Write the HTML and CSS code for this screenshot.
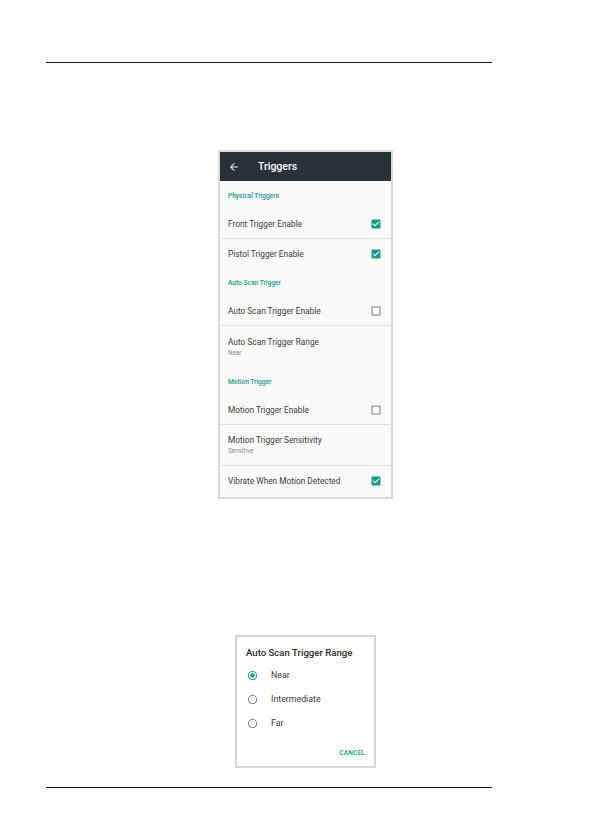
FILE: index.html
```html
<!DOCTYPE html>
<html lang="en">
<head>
  <meta charset="UTF-8">
  <meta name="viewport" content="width=device-width, initial-scale=1.0">
  <title>Triggers</title>
  <link rel="stylesheet" href="styles.css">
</head>
<body>
  <div class="page">
    <div class="rule"></div>

    <!-- Triggers settings screen -->
    <div class="shot">
      <div class="appbar">
        <svg class="back" viewBox="0 0 24 24"><path d="M20 11H7.83l5.59-5.59L12 4l-8 8 8 8 1.41-1.41L7.83 13H20v-2z"/></svg>
        <span class="appbar-title">Triggers</span>
      </div>
      <div class="list">
        <div class="section">Physical Triggers</div>
        <div class="row divided">
          <span class="label">Front Trigger Enable</span>
          <svg class="check on" viewBox="0 0 24 24"><path d="M19 3H5c-1.11 0-2 .9-2 2v14c0 1.1.89 2 2 2h14c1.11 0 2-.9 2-2V5c0-1.1-.89-2-2-2zm-9 14l-5-5 1.41-1.41L10 14.170l7.59-7.59L19 8l-9 9z"/></svg>
        </div>
        <div class="row">
          <span class="label">Pistol Trigger Enable</span>
          <svg class="check on" viewBox="0 0 24 24"><path d="M19 3H5c-1.11 0-2 .9-2 2v14c0 1.1.89 2 2 2h14c1.11 0 2-.9 2-2V5c0-1.1-.89-2-2-2zm-9 14l-5-5 1.41-1.41L10 14.17l7.59-7.59L19 8l-9 9z"/></svg>
        </div>

        <div class="section">Auto Scan Trigger</div>
        <div class="row divided">
          <span class="label">Auto Scan Trigger Enable</span>
          <svg class="check" viewBox="0 0 24 24"><path d="M19 5v14H5V5h14m0-2H5c-1.1 0-2 .9-2 2v14c0 1.1.9 2 2 2h14c1.1 0 2-.9 2-2V5c0-1.1-.9-2-2-2z"/></svg>
        </div>
        <div class="row tall">
          <div>
            <div class="label">Auto Scan Trigger Range</div>
            <div class="summary">Near</div>
          </div>
        </div>

        <div class="section">Motion Trigger</div>
        <div class="row divided">
          <span class="label">Motion Trigger Enable</span>
          <svg class="check" viewBox="0 0 24 24"><path d="M19 5v14H5V5h14m0-2H5c-1.1 0-2 .9-2 2v14c0 1.1.9 2 2 2h14c1.1 0 2-.9 2-2V5c0-1.1-.9-2-2-2z"/></svg>
        </div>
        <div class="row tall divided">
          <div>
            <div class="label">Motion Trigger Sensitivity</div>
            <div class="summary">Sensitive</div>
          </div>
        </div>
        <div class="row">
          <span class="label">Vibrate When Motion Detected</span>
          <svg class="check on" viewBox="0 0 24 24"><path d="M19 3H5c-1.11 0-2 .9-2 2v14c0 1.1.89 2 2 2h14c1.11 0 2-.9 2-2V5c0-1.1-.89-2-2-2zm-9 14l-5-5 1.41-1.41L10 14.17l7.59-7.59L19 8l-9 9z"/></svg>
        </div>
      </div>
    </div>

    <!-- Range dialog -->
    <div class="dialog">
      <div class="dialog-title">Auto Scan Trigger Range</div>
      <div class="option">
        <svg class="radio on" viewBox="0 0 24 24"><path d="M12 7c-2.76 0-5 2.240-5 5s2.24 5 5 5 5-2.24 5-5-2.24-5-5-5zm0-5C6.48 2 2 6.48 2 12s4.48 10 10 10 10-4.48 10-10S17.52 2 12 2zm0 18c-4.42 0-8-3.58-8-8s3.58-8 8-8 8 3.58 8 8-3.58 8-8 8z"/></svg>
        <span>Near</span>
      </div>
      <div class="option">
        <svg class="radio" viewBox="0 0 24 24"><path d="M12 2C6.48 2 2 6.48 2 12s4.48 10 10 10 10-4.48 10-10S17.52 2 12 2zm0 18c-4.42 0-8-3.58-8-8s3.58-8 8-8 8 3.58 8 8-3.58 8-8 8z"/></svg>
        <span>Intermediate</span>
      </div>
      <div class="option">
        <svg class="radio" viewBox="0 0 24 24"><path d="M12 2C6.48 2 2 6.48 2 12s4.48 10 10 10 10-4.48 10-10S17.52 2 12 2zm0 18c-4.42 0-8-3.58-8-8s3.58-8 8-8 8 3.58 8 8-3.58 8-8 8z"/></svg>
        <span>Far</span>
      </div>
      <div class="actions">
        <span class="cancel">CANCEL</span>
      </div>
    </div>

    <div class="rule bottom"></div>
  </div>
</body>
</html>
```

FILE: styles.css
```css
body {
  margin: 0;
  background: #ffffff;
  font-family: Roboto, "Liberation Sans", sans-serif;
  color: #212121;
}
.page {
  width: 446px;
  padding: 62px 0 0 46px;
}
.rule {
  height: 1px;
  background-color: #14124a;
}
.rule.bottom {
  margin-top: 19px;
}

/* settings screenshot */
.shot {
  width: 171px;
  margin: 87px 0 0 172px;
  border: 2px solid #d9d9d9;
  background: #fafafa;
}
.appbar {
  height: 29px;
  background-color: #263238;
  color: white;
  display: flex;
  align-items: center;
}
.back {
  width: 12px;
  height: 12px;
  margin-left: 8px;
  fill: #e8eaeb;
}
.appbar-title {
  margin-left: 18px;
  font-size: 10.5px;
  font-weight: 500;
}
.list {
  height: 316px;
  overflow: hidden;
}
.section {
  height: 29px;
  line-height: 30px;
  padding-left: 8px;
  font-size: 6.6px;
  font-weight: 500;
  color: #15998a;
}
.row {
  box-sizing: border-box;
  height: 29px;
  padding: 0 9px 0 8px;
  display: flex;
  align-items: center;
  justify-content: space-between;
}
.row.tall {
  height: 41px;
}
.divided {
  border-bottom: 1px solid #e2e2e2;
}
.label {
  font-size: 8.3px;
  color: #3a3a3a;
}
.summary {
  margin-top: 2px;
  font-size: 6.3px;
  color: #8a8a8a;
}
.check {
  width: 12px;
  height: 12px;
  fill: #7a7a7a;
}
.check.on {
  fill: #15998a;
}

/* dialog */
.dialog {
  width: 137px;
  margin: 136px 0 0 189px;
  border: 2px solid #d6d6d6;
  background: white;
}
.dialog-title {
  padding: 10px 0 0 9px;
  height: 16px;
  font-size: 9.6px;
  font-weight: 500;
  color: #2a2a2a;
}
.option {
  height: 24px;
  display: flex;
  align-items: center;
  font-size: 8.8px;
  color: #3a3a3a;
}
.radio {
  width: 11px;
  height: 11px;
  margin: 0 13px 0 10px;
  fill: #7a7a7a;
}
.radio.on {
  fill: #15998a;
}
.actions {
  height: 27px;
  display: flex;
  justify-content: flex-end;
  align-items: center;
  padding-right: 9px;
  margin-top: 4px;
}
.cancel {
  font-size: 6.5px;
  font-weight: 500;
  letter-spacing: 0.2px;
  color: #15998a;
}
```
